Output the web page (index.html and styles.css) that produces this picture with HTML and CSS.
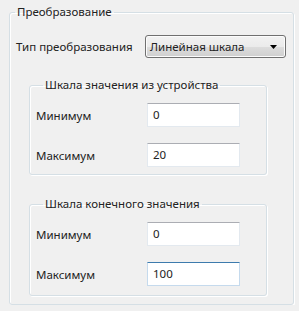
FILE: index.html
```html
<!DOCTYPE html>
<html lang="ru">
<head>
<meta charset="utf-8">
<link rel="stylesheet" href="styles.css">
</head>
<body>
<fieldset class="group outer">
  <legend class="legend legend-outer">Преобразование</legend>
  <div class="row row-type">
    <span class="label">Тип преобразования</span>
    <div class="combo">
      <span class="combo-text">Линейная шкала</span>
      <svg class="arrow" width="7" height="4" viewBox="0 0 7 4"><path d="M0 0H7L3.5 4Z" fill="#000"/></svg>
    </div>
  </div>
  <fieldset class="group inner first">
    <legend class="legend legend-inner">Шкала значения из устройства</legend>
    <div class="row"><span class="label">Минимум</span><div class="input">0</div></div>
    <div class="row"><span class="label">Максимум</span><div class="input">20</div></div>
  </fieldset>
  <fieldset class="group inner second">
    <legend class="legend legend-inner">Шкала конечного значения</legend>
    <div class="row"><span class="label">Минимум</span><div class="input">0</div></div>
    <div class="row"><span class="label">Максимум</span><div class="input focus">100</div></div>
  </fieldset>
</fieldset>
</body>
</html>
```
FILE: styles.css
```css
html, body {
  margin: 0;
  background: #f0f0f0;
}
body {
  font-family: "Noto Sans", "DejaVu Sans", sans-serif;
  font-size: 11.5px;
  color: #222;
  padding: 4px 0 0 9px;
}
.group {
  margin: 0;
  border: 1px solid #d5dfe5;
  border-radius: 3px;
  box-shadow: inset 1px 1px 0 #fff, 1px 1px 0 #fff;
  min-width: 0;
}
.outer {
  box-sizing: border-box;
  width: 285px;
  height: 301px;
  padding: 0 0 0 6px;
}
.legend {
  padding: 0 2px;
  line-height: 16px;
}
.legend-outer {
  margin-left: -1px;
}
.legend-inner {
  margin-left: 7px;
}
.row {
  display: flex;
  align-items: center;
}
.row-type {
  margin-top: 15px;
  height: 23px;
}
.row-type .label {
  width: 129px;
}
.combo {
  box-sizing: border-box;
  width: 141px;
  height: 23px;
  border: 1px solid #707070;
  border-radius: 3px;
  background: linear-gradient(#f2f2f2 0%, #ebebeb 50%, #dddddd 51%, #cfcfcf 100%);
  box-shadow: inset 0 0 0 1px #fcfcfc;
  display: flex;
  align-items: center;
  padding: 0 8px 0 4px;
}
.combo-text {
  flex: 1;
}
.inner {
  box-sizing: border-box;
  width: 238px;
  margin-left: 13px;
  padding: 0 0 0 6px;
}
.first {
  margin-top: 19px;
  height: 98px;
}
.second {
  margin-top: 21px;
  height: 100px;
}
.inner .row {
  height: 24px;
  margin-top: 16px;
}
.inner .row:first-of-type {
  margin-top: 10px;
}
.inner .label {
  width: 111px;
}
.input {
  box-sizing: border-box;
  width: 93px;
  height: 24px;
  background: #fff;
  border: 1px solid #e3e9ef;
  border-top-color: #abadb3;
  padding: 0 5px;
  line-height: 22px;
}
.input.focus {
  border-color: #c5daed;
  border-top-color: #3d7bad;
}
```
